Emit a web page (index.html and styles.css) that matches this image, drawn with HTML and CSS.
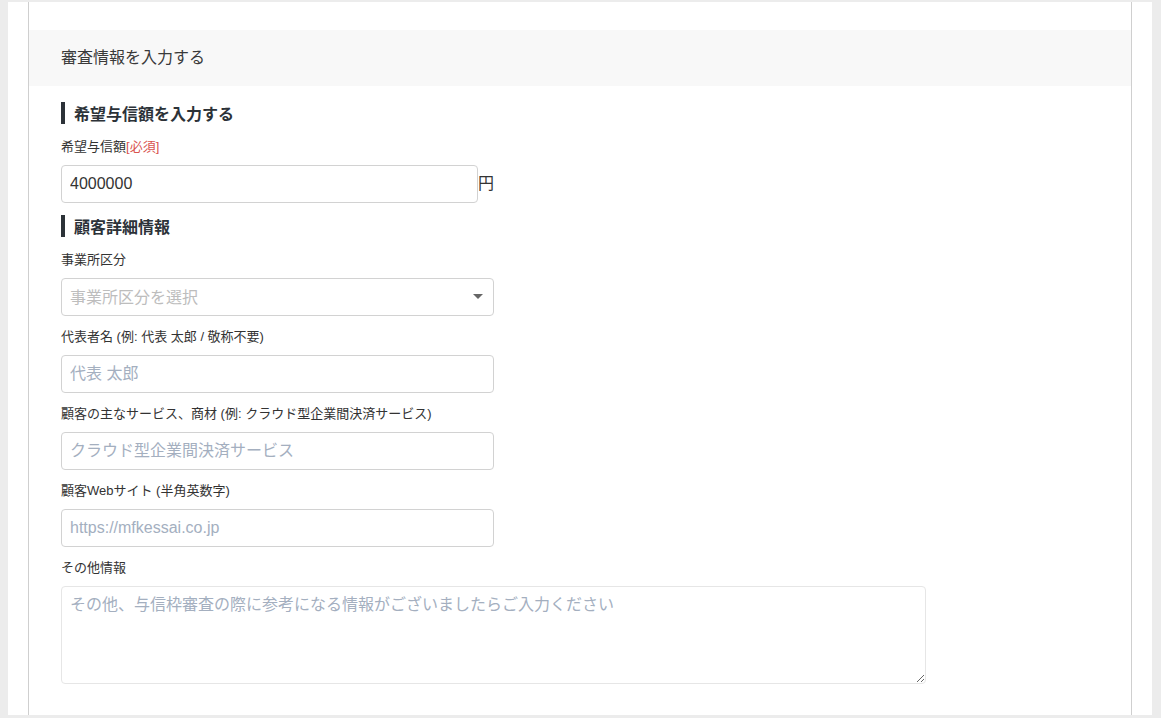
FILE: index.html
```html
<!DOCTYPE html>
<html lang="ja">
<head>
<meta charset="utf-8">
<title>審査情報を入力する</title>
<link rel="stylesheet" href="styles.css">
</head>
<body>
<div class="outer">
  <div class="card">
    <div class="section-header">審査情報を入力する</div>
    <div class="section-body">
      <h2 class="sub-heading">希望与信額を入力する</h2>
      <div class="form-group">
        <label class="label">希望与信額<span class="required">[必須]</span></label>
        <div class="amount-row">
          <input class="input input-amount" type="text" value="4000000">
          <span class="unit">円</span>
        </div>
      </div>
      <h2 class="sub-heading">顧客詳細情報</h2>
      <div class="form-group">
        <label class="label">事業所区分</label>
        <div class="select-wrap">
          <select class="input select">
            <option>事業所区分を選択</option>
          </select>
          <svg class="select-arrow" width="10" height="5" viewBox="0 0 10 5"><path d="M0 0 L10 0 L5 5 Z" fill="#666"/></svg>
        </div>
      </div>
      <div class="form-group">
        <label class="label">代表者名 (例: 代表 太郎 / 敬称不要)</label>
        <input class="input" type="text" placeholder="代表 太郎">
      </div>
      <div class="form-group">
        <label class="label">顧客の主なサービス、商材 (例: クラウド型企業間決済サービス)</label>
        <input class="input" type="text" placeholder="クラウド型企業間決済サービス">
      </div>
      <div class="form-group">
        <label class="label">顧客Webサイト (半角英数字)</label>
        <input class="input" type="text" placeholder="https://mfkessai.co.jp">
      </div>
      <div class="form-group">
        <label class="label">その他情報</label>
        <textarea class="textarea" placeholder="その他、与信枠審査の際に参考になる情報がございましたらご入力ください"></textarea>
      </div>
    </div>
  </div>
</div>
</body>
</html>
```

FILE: styles.css
```css
html, body {
  margin: 0;
  padding: 0;
}

body {
  background: #ececec;
  height: 718px;
  overflow: hidden;
  font-family: "Liberation Sans", "Noto Sans CJK JP", sans-serif;
  color: #333;
}

.outer {
  margin: 2px 9px 0 8px;
  height: 713px;
  padding: 0 20px;
  background: #fff;
  overflow: hidden;
}

.card {
  height: 100%;
  border-left: 1px solid #cfcfcf;
  border-right: 1px solid #cfcfcf;
  padding-top: 28px;
  box-sizing: border-box;
}

.section-header {
  height: 56px;
  line-height: 56px;
  padding-left: 32px;
  background: #f8f8f8;
  font-size: 16px;
  color: #3a3a3a;
}

.section-body {
  padding: 16px 32px 0 32px;
}

.sub-heading {
  display: flex;
  align-items: center;
  margin: 0 0 14px 0;
  height: 22px;
  font-size: 16px;
  font-weight: bold;
  color: #2c3238;
}

.sub-heading::before {
  content: "";
  width: 4px;
  height: 22px;
  background: #2c3238;
  margin-right: 9px;
}

.form-group {
  margin-bottom: 12px;
}

.label {
  display: block;
  font-size: 13px;
  line-height: 18px;
  margin-bottom: 9px;
  color: #333;
}

.required {
  color: #d9534f;
}

.amount-row {
  display: flex;
  align-items: center;
}

.input {
  display: block;
  box-sizing: border-box;
  width: 433px;
  height: 38px;
  padding: 0 8px;
  border: 1px solid #d2d2d2;
  border-radius: 4px;
  font-family: "Liberation Sans", "Noto Sans CJK JP", sans-serif;
  font-size: 16px;
  color: #333;
  background: #fff;
  outline: none;
}

.input::placeholder,
.textarea::placeholder {
  color: #a4afbf;
}

.input-amount {
  width: 417px;
}

.unit {
  font-size: 16px;
  color: #333;
  margin-bottom: 4px;
}

.select-wrap {
  position: relative;
  width: 433px;
}

.select {
  appearance: none;
  -webkit-appearance: none;
  color: #bdbdbd;
}

.select-arrow {
  position: absolute;
  right: 11px;
  top: 16px;
}

.textarea {
  display: block;
  box-sizing: border-box;
  width: 865px;
  height: 98px;
  padding: 6px 8px;
  border: 1px solid #e6e6e6;
  border-radius: 4px;
  font-family: "Liberation Sans", "Noto Sans CJK JP", sans-serif;
  font-size: 16px;
  line-height: 24px;
  color: #333;
  outline: none;
}
```
